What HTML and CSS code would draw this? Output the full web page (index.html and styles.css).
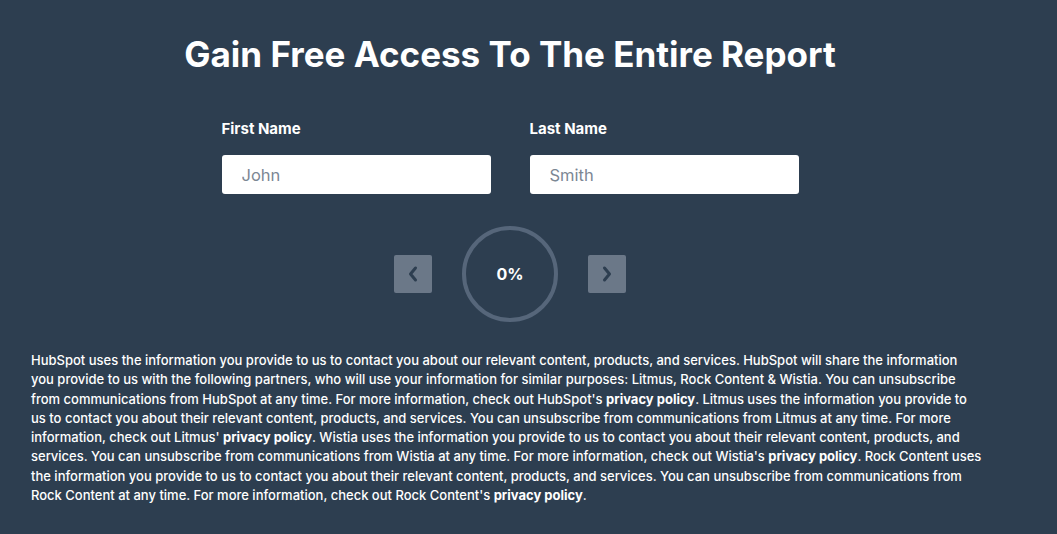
FILE: index.html
```html
<!DOCTYPE html>
<html>
<head>
<meta charset="utf-8">
<link rel="stylesheet" href="styles.css">
</head>
<body>
<main class="page">
  <h1 class="title">Gain Free Access To The Entire Report</h1>
  <form class="form">
    <div class="field">
      <label class="label">First Name</label>
      <input class="input" type="text" placeholder="John">
    </div>
    <div class="field">
      <label class="label">Last Name</label>
      <input class="input" type="text" placeholder="Smith">
    </div>
  </form>
  <div class="progress">
    <button class="nav" type="button" aria-label="Previous">
      <svg width="14" height="20" viewBox="0 0 14 20"><path d="M9.5 4 L4.5 10 L9.5 16" fill="none" stroke="#2d3e50" stroke-width="3" stroke-linecap="round" stroke-linejoin="round"/></svg>
    </button>
    <div class="ring">
      <svg class="ring-svg" width="98" height="98" viewBox="0 0 98 98"><circle cx="49" cy="49" r="46" fill="none" stroke="#56667a" stroke-width="4"/></svg>
      <span class="pct">0%</span>
    </div>
    <button class="nav" type="button" aria-label="Next">
      <svg width="14" height="20" viewBox="0 0 14 20"><path d="M4.5 4 L9.5 10 L4.5 16" fill="none" stroke="#2d3e50" stroke-width="3" stroke-linecap="round" stroke-linejoin="round"/></svg>
    </button>
  </div>
  <p class="legal">HubSpot uses the information you provide to us to contact you about our relevant content, products, and services. HubSpot will share the information you provide to us with the following partners, who will use your information for similar purposes: Litmus, Rock Content &amp; Wistia. You can unsubscribe from communications from HubSpot at any time. For more information, check out HubSpot's <b>privacy policy</b>. Litmus uses the information you provide to us to contact you about their relevant content, products, and services. You can unsubscribe from communications from Litmus at any time. For more information, check out Litmus' <b>privacy policy</b>. Wistia uses the information you provide to us to contact you about their relevant content, products, and services. You can unsubscribe from communications from Wistia at any time. For more information, check out Wistia's <b>privacy policy</b>. Rock Content uses the information you provide to us to contact you about their relevant content, products, and services. You can unsubscribe from communications from Rock Content at any time. For more information, check out Rock Content's <b>privacy policy</b>.</p>
</main>
</body>
</html>
```
FILE: styles.css
```css
html, body {
  margin: 0;
  padding: 0;
  background: #2d3e50;
}
body {
  font-family: "Inter", "Lato", sans-serif;
  color: #ffffff;
}
.page {
  width: 1020px;
  box-sizing: border-box;
  padding: 0 31px;
  display: flex;
  flex-direction: column;
  align-items: center;
}
.title {
  margin: 32px 0 0;
  font-size: 35px;
  font-weight: 700;
  line-height: 44px;
  text-align: center;
}
.form {
  margin-top: 44px;
  display: flex;
  gap: 39px;
}
.field {
  display: flex;
  flex-direction: column;
  width: 269px;
}
.label {
  font-size: 15px;
  font-weight: 700;
  line-height: 18px;
  margin-bottom: 17px;
}
.input {
  height: 39px;
  box-sizing: border-box;
  border: none;
  border-radius: 3px;
  background: #ffffff;
  padding: 0 20px;
  font-family: inherit;
  font-size: 16.5px;
  color: #33475b;
  outline: none;
}
.input::placeholder {
  color: #7c8794;
}
.progress {
  margin-top: 31px;
  display: flex;
  align-items: center;
  gap: 29px;
}
.nav {
  width: 38px;
  height: 38px;
  border: none;
  border-radius: 2px;
  background: #6b7888;
  display: flex;
  align-items: center;
  justify-content: center;
  padding: 0;
}
.ring {
  position: relative;
  width: 98px;
  height: 98px;
  display: flex;
  align-items: center;
  justify-content: center;
}
.ring-svg {
  position: absolute;
  inset: 0;
}
.pct {
  position: relative;
  font-size: 16px;
  font-weight: 700;
}
.legal {
  align-self: stretch;
  margin: 28px 7px 0 0;
  font-size: 13px;
  line-height: 19.3px;
  font-weight: 500;
}
.legal b {
  font-weight: 700;
}
```
